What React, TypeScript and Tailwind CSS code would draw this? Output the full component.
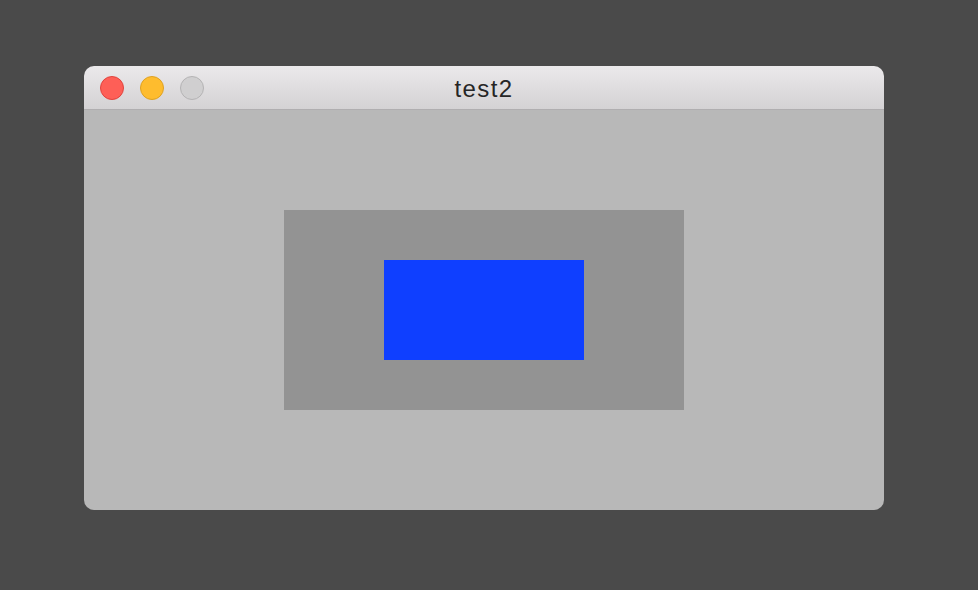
import React from "react";

const TrafficLight: React.FC<{ className: string }> = ({ className }) => (
  <div className={`w-6 h-6 rounded-full border ${className}`} />
);

const App: React.FC = () => {
  return (
    <div className="w-[978px] h-[590px] bg-[#4a4a4a] pt-[66px] pl-[84px]">
      <div className="w-[800px] rounded-[10px] overflow-hidden flex flex-col">
        {/* title bar */}
        <div className="relative h-[44px] flex items-center bg-gradient-to-b from-[#ebe9eb] to-[#d4d2d4] border-b border-[#b0aeb0]">
          <div className="flex items-center gap-4 pl-4">
            <TrafficLight className="bg-[#fe5f57] border-[#e0443e]" />
            <TrafficLight className="bg-[#febc2e] border-[#dea123]" />
            <TrafficLight className="bg-[#d0cfd0] border-[#b4b3b4]" />
          </div>
          <div
            className="absolute inset-0 flex items-center justify-center text-[24px] tracking-[1.4px] text-[#262626] pt-[2px]"
            style={{ fontFamily: '"Liberation Sans", Arial, sans-serif' }}
          >
            test2
          </div>
        </div>
        {/* content */}
        <div className="h-[400px] bg-[#b8b8b8] flex items-center justify-center">
          <div className="w-[400px] h-[200px] bg-[#939393] flex items-center justify-center">
            <div className="w-[200px] h-[100px] bg-[#0f3fff]" />
          </div>
        </div>
      </div>
    </div>
  );
};

export default App;
